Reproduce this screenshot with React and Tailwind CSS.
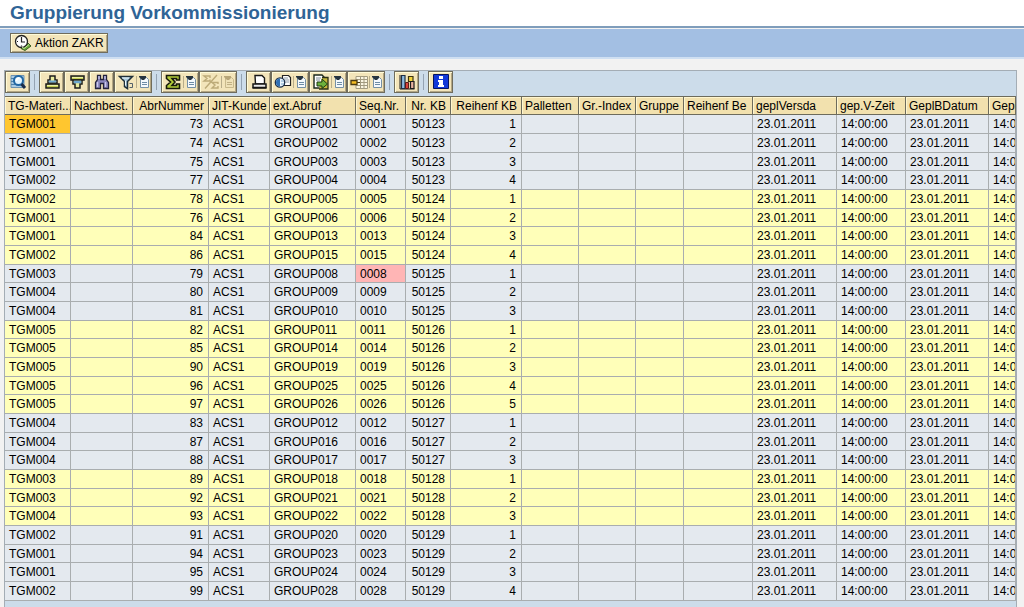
import { useState } from 'react';

const columns = [
  { key: 'material', title: 'TG-Materi...', width: 'w-[66px]' },
  { key: 'reorder', title: 'Nachbest.', width: 'w-[62px]' },
  { key: 'callNo', title: 'AbrNummer', width: 'w-[76px]', right: true },
  { key: 'customer', title: 'JIT-Kunde', width: 'w-[61px]' },
  { key: 'extCall', title: 'ext.Abruf', width: 'w-[86px]' },
  { key: 'seqNo', title: 'Seq.Nr.', width: 'w-[50px]' },
  { key: 'kbNo', title: 'Nr. KB', width: 'w-[45px]', right: true },
  { key: 'kbOrder', title: 'Reihenf KB', width: 'w-[71px]', right: true },
  { key: 'pallets', title: 'Palletten', width: 'w-[57px]' },
  { key: 'groupIndex', title: 'Gr.-Index', width: 'w-[57px]' },
  { key: 'group', title: 'Gruppe', width: 'w-[48px]' },
  { key: 'beOrder', title: 'Reihenf Be', width: 'w-[69px]' },
  { key: 'shipDate', title: 'geplVersda', width: 'w-[84px]' },
  { key: 'shipTime', title: 'gep.V-Zeit', width: 'w-[69px]' },
  { key: 'needDate', title: 'GeplBDatum', width: 'w-[83px]' },
  { key: 'needTime', title: 'GeplBZeit', width: '' },
];

// material, call number, group/sequence number, KB number, order in KB
const data = [
  ['TGM001', 73, 1, 50123, 1],
  ['TGM001', 74, 2, 50123, 2],
  ['TGM001', 75, 3, 50123, 3],
  ['TGM002', 77, 4, 50123, 4],
  ['TGM002', 78, 5, 50124, 1],
  ['TGM001', 76, 6, 50124, 2],
  ['TGM001', 84, 13, 50124, 3],
  ['TGM002', 86, 15, 50124, 4],
  ['TGM003', 79, 8, 50125, 1],
  ['TGM004', 80, 9, 50125, 2],
  ['TGM004', 81, 10, 50125, 3],
  ['TGM005', 82, 11, 50126, 1],
  ['TGM005', 85, 14, 50126, 2],
  ['TGM005', 90, 19, 50126, 3],
  ['TGM005', 96, 25, 50126, 4],
  ['TGM005', 97, 26, 50126, 5],
  ['TGM004', 83, 12, 50127, 1],
  ['TGM004', 87, 16, 50127, 2],
  ['TGM004', 88, 17, 50127, 3],
  ['TGM003', 89, 18, 50128, 1],
  ['TGM003', 92, 21, 50128, 2],
  ['TGM004', 93, 22, 50128, 3],
  ['TGM002', 91, 20, 50129, 1],
  ['TGM001', 94, 23, 50129, 2],
  ['TGM001', 95, 24, 50129, 3],
  ['TGM002', 99, 28, 50129, 4],
];

const rows = data.map(([material, callNo, seq, kbNo, kbOrder]) => ({
  material,
  callNo,
  customer: 'ACS1',
  extCall: `GROUP${String(seq).padStart(3, '0')}`,
  seqNo: String(seq).padStart(4, '0'),
  kbNo,
  kbOrder,
  shipDate: '23.01.2011',
  shipTime: '14:00:00',
  needDate: '23.01.2011',
  needTime: '14:00:00',
  seqError: seq === 8,
}));

const buttonClasses =
  'flex shrink-0 items-center justify-center border border-[#6f6c5c] bg-[#f3e5ba] shadow-[inset_1px_1px_0_#fffbd8,inset_-1px_-1px_0_#b3a683]';

function Icon({ children }) {
  return (
    <svg width="18" height="18" viewBox="0 0 18 18" className="shrink-0" aria-hidden="true">
      {children}
    </svg>
  );
}

function ExecuteIcon() {
  return (
    <Icon>
      <path d="M7 12h6V8l4 4-6 4.500-4-2z" fill="#69a83a" stroke="#3d5f22" />
      <circle cx="7.5" cy="7.5" r="6" fill="#fff" stroke="#222" strokeWidth="1.3" />
      <path d="M7.5 3v5H11M7.5 11.5v1M3 7.5h1" fill="none" stroke="#222" strokeWidth="1.2" />
      <path d="M8 13l2 1.500 5-4" fill="none" stroke="#c5e89a" />
    </Icon>
  );
}

function DetailsIcon() {
  return (
    <Icon>
      <path d="M2 2.500h13v12H2z" fill="#a9cbe4" stroke="#6d93b0" />
      <path d="M2 5.500h4M2 8.500h3M2 11.500h6" stroke="#4d80a8" />
      <circle cx="9.500" cy="7.500" r="4.500" fill="#e3f5ff" stroke="#2268a5" strokeWidth="2" />
      <path d="M7.500 8q0-3 3-3" fill="none" stroke="#fff" strokeWidth="1.500" />
      <path d="M12.500 11l3.500 4" stroke="#1b2c48" strokeWidth="3" />
    </Icon>
  );
}

function SortUpIcon() {
  return (
    <Icon>
      <path d="M7 3h5v4h2v3H5V7h2z" fill="#e9ec9d" stroke="#1c1c1c" strokeWidth="1.500" />
      <path d="M5.750 8.500h7.500" stroke="#6fa8cf" strokeWidth="2" />
      <path d="M3 11h13v4H3z" fill="#c3cf52" stroke="#1c1c1c" strokeWidth="1.500" />
      <path d="M4 12.500h11" stroke="#eef0a8" />
    </Icon>
  );
}

function SortDownIcon() {
  return (
    <Icon>
      <path d="M3 3h13v4H3z" fill="#c3cf52" stroke="#1c1c1c" strokeWidth="1.500" />
      <path d="M4 4.500h11" stroke="#eef0a8" />
      <path d="M5 7h9v4h-2v4H7v-4H5z" fill="#e9ec9d" stroke="#1c1c1c" strokeWidth="1.500" />
      <path d="M5.750 9h7.500" stroke="#6fa8cf" strokeWidth="2.500" />
    </Icon>
  );
}

function FindIcon() {
  return (
    <Icon>
      <path
        d="M4.500 2.500h3v4h3v-4h3v4l2 3v6h-5v-5h-3v5h-5v-6l2-3z"
        fill="#8b87bd"
        stroke="#24233c"
        strokeWidth="1.300"
      />
      <path d="M4.500 9v5M12.500 9v5M6 3v3M12 3v3" stroke="#c9c8ec" strokeWidth="1.300" />
    </Icon>
  );
}

function FilterIcon() {
  return (
    <Icon>
      <path d="M2.500 3.500h13l-5 5v7l-3-2v-5z" fill="#a5c6da" stroke="#1e2e38" strokeWidth="1.500" />
      <path d="M5 5h7M8.500 7.500v5" stroke="#eef8fd" />
      <path d="M12.500 10.500h3v4h-3" fill="none" stroke="#53606a" />
    </Icon>
  );
}

function SumIcon() {
  return (
    <Icon>
      <path
        d="M2.500 2.500h13v4.500h-3v-1.500h-4.500l3 3.500-3 3.500h4.500v-1.500h3v4.500h-13v-3l4-3.500-4-3.500z"
        fill="#b3cc3a"
        stroke="#16190a"
        strokeWidth="1.600"
      />
    </Icon>
  );
}

function SubtotalIcon() {
  return (
    <Icon>
      <path
        d="M8 5V3H2l3 2.500L2 8h6V6.500M16 11V9.500h-6l3 2.500-3 3h6v-2M3 15.500L15 2"
        fill="none"
        stroke="#bdab78"
        strokeWidth="1.400"
      />
    </Icon>
  );
}

function PrintIcon() {
  return (
    <Icon>
      <path d="M5 2.500h7l2.500 2.500v6h-9z" fill="#fff" stroke="#161616" strokeWidth="1.400" />
      <path d="M3 11h13v3.500H3z" fill="#e9e9e9" stroke="#161616" strokeWidth="1.500" />
      <path d="M2.500 15h14" stroke="#161616" strokeWidth="1.500" />
    </Icon>
  );
}

function ViewIcon() {
  return (
    <Icon>
      <path d="M8.500 2.500h6l2 2v8h-8z" fill="#fff" stroke="#222" strokeWidth="1.200" />
      <path d="M10 5h4M10 7h5M10 9h5" stroke="#8d9ba5" />
      <circle cx="6" cy="9.500" r="4.700" fill="#eaf5fc" stroke="#1b2f49" strokeWidth="1.300" />
      <path d="M6 5.500a4 4 0 0 0 0 8z" fill="#2f70b6" />
      <path d="M7 8h3M7 11h3" stroke="#7aa6cc" />
    </Icon>
  );
}

function ExportIcon() {
  return (
    <Icon>
      <path d="M2 2h8l2 2v11H2z" fill="#fff" stroke="#1c2a1c" strokeWidth="1.400" />
      <path d="M4 5h5M4 7h4" stroke="#7c8a94" />
      <path d="M10 4.500h6V16H7" fill="#c6b83e" stroke="#2b2f15" strokeWidth="1.300" />
      <path d="M5 9h5V6l5.500 5L10 15.500V13H5z" fill="#6cb03c" stroke="#1e3a12" />
    </Icon>
  );
}

function LayoutIcon() {
  return (
    <Icon>
      <path d="M6 3.500h11.500v12H6z" fill="#fbf6e2" stroke="#a39b80" />
      <path d="M6 6.500h11M6 9.500h11M6 12.500h11M10.500 4v11M14 4v11" stroke="#a39b80" />
      <path d="M1 7.500h6v4H1z" fill="#f5bd22" stroke="#4b3b12" strokeWidth="1.300" />
      <path d="M7 9.500h3" stroke="#4b3b12" />
    </Icon>
  );
}

function ChartIcon() {
  return (
    <Icon>
      <path d="M2 2v14h14.500" fill="none" stroke="#1c1c1c" />
      <path d="M3.500 2.500h3.500v13H3.500z" fill="#8dbbe0" stroke="#1f2f45" strokeWidth="1.200" />
      <path d="M7.500 9.500h3v6h-3z" fill="#d9443c" stroke="#5b1a17" />
      <path d="M10.500 3.500h4.500v5h-4.500z" fill="#f3d43c" stroke="#3d3410" strokeWidth="1.200" />
      <path d="M12.500 8.500h3.500v7h-3.500z" fill="#e8b2a0" stroke="#1c1c1c" strokeWidth="1.200" />
    </Icon>
  );
}

function InfoIcon() {
  return (
    <Icon>
      <path d="M1.500 1.500h15v14h-15z" fill="#1238d8" stroke="#06145f" />
      <path d="M7 3h4v3H7zM6 7h5v5h1v2H6v-2h1V9H6z" fill="#fff" />
    </Icon>
  );
}

function MenuMark({ disabled }) {
  return (
    <svg width="15" height="18" viewBox="0 0 15 18" className="shrink-0" aria-hidden="true">
      <path d="M1.500 3v12" stroke="#b8ad8a" />
      <path
        d="M5.500 4.500h6l2 2v8h-8z"
        fill={disabled ? '#efe2b8' : '#f4f9fd'}
        stroke={disabled ? '#c9ba8c' : '#7590a5'}
      />
      <path d="M4 3h7v2l-2 2H7L4 4z" fill={disabled ? '#b7a679' : '#26343f'} />
      <path d="M7 9.500h5M7 11.500h5" stroke={disabled ? '#c1b184' : '#6d8ca6'} />
    </svg>
  );
}

const toolGroups = [
  [{ label: 'Details', icon: DetailsIcon }],
  [
    { label: 'Aufsteigend sortieren', icon: SortUpIcon },
    { label: 'Absteigend sortieren', icon: SortDownIcon },
    { label: 'Suchen', icon: FindIcon },
    { label: 'Filter', icon: FilterIcon, menu: true },
  ],
  [
    { label: 'Summe', icon: SumIcon, menu: true },
    { label: 'Zwischensumme', icon: SubtotalIcon, menu: true, disabled: true },
  ],
  [
    { label: 'Drucken', icon: PrintIcon },
    { label: 'Sichten', icon: ViewIcon, menu: true },
    { label: 'Exportieren', icon: ExportIcon, menu: true },
    { label: 'Layout', icon: LayoutIcon, menu: true },
  ],
  [{ label: 'Grafik', icon: ChartIcon }],
  [{ label: 'Information', icon: InfoIcon }],
];

function Toolbar() {
  return (
    <div role="toolbar" className="flex h-[25px] items-start">
      {toolGroups.map((group, i) => (
        <div key={i} className="flex items-center">
          {i > 0 && <span className="mx-1 h-4 w-px bg-[#94a3b3]" />}
          {group.map(({ label, icon: ToolIcon, menu, disabled }) => (
            <button
              key={label}
              type="button"
              aria-label={label}
              disabled={disabled}
              className={`${buttonClasses} h-[22px] ${menu ? 'w-[38px]' : 'w-[25px]'}`}
            >
              <ToolIcon />
              {menu && <MenuMark disabled={disabled} />}
            </button>
          ))}
        </div>
      ))}
    </div>
  );
}

function cellColor(row, column, isSelected) {
  if (isSelected) return 'bg-[#ffc62f]';
  if (column.key === 'seqNo' && row.seqError) return 'bg-[#ffb5b5]';
  return row.kbNo % 2 === 0 ? 'bg-[#ffffb9]' : 'bg-[#e4e9ef]';
}

export default function App() {
  const [selected, setSelected] = useState('0-material');

  return (
    <main className="flex min-h-screen flex-col bg-[#f2f2f2] font-['Liberation_Sans',Arial,sans-serif] text-xs text-black">
      <h1 className="h-7 border-b-2 border-[#7f9dbb] bg-white pl-[10px] text-[19px] leading-[26px] font-bold text-[#2f6496]">
        Gruppierung Vorkommissionierung
      </h1>

      <div className="mt-px flex h-[30px] items-center border-b-2 border-[#cfdff2] bg-[#a3bfe3] px-[10px]">
        <button type="button" className={`${buttonClasses} h-5 gap-[3px] px-[3px]`}>
          <ExecuteIcon />
          Aktion ZAKR
        </button>
      </div>

      <section className="mt-[11px] mr-[7px] ml-1 flex-1 border-x border-t border-[#a4adb5] bg-[#ccdcea]">
        <Toolbar />

        <table className="w-full table-fixed border-separate border-spacing-0 leading-4">
          <thead>
            <tr className="h-[19px]">
              {columns.map((column) => (
                <th
                  key={column.key}
                  scope="col"
                  className={`${column.width} overflow-hidden border-y border-r border-[#6d6b5c] bg-[#f2e1ae] p-0 font-normal whitespace-nowrap shadow-[inset_1px_1px_0_#fff6cf] ${
                    column.right ? 'pr-1 text-right' : 'pl-[3px] text-left'
                  }`}
                >
                  {column.title}
                </th>
              ))}
            </tr>
          </thead>
          <tbody>
            {rows.map((row, i) => (
              <tr key={row.callNo} className="h-[19px] nth-[3n]:h-[18px]">
                {columns.map((column) => {
                  const id = `${i}-${column.key}`;
                  return (
                    <td
                      key={column.key}
                      onClick={() => setSelected(id)}
                      className={`overflow-hidden border-r border-b border-[#a9adaf] py-0 pr-[5px] pl-1 whitespace-nowrap ${
                        column.right ? 'text-right' : 'text-left'
                      } ${cellColor(row, column, id === selected)}`}
                    >
                      {row[column.key]}
                    </td>
                  );
                })}
              </tr>
            ))}
          </tbody>
        </table>
      </section>
    </main>
  );
}
